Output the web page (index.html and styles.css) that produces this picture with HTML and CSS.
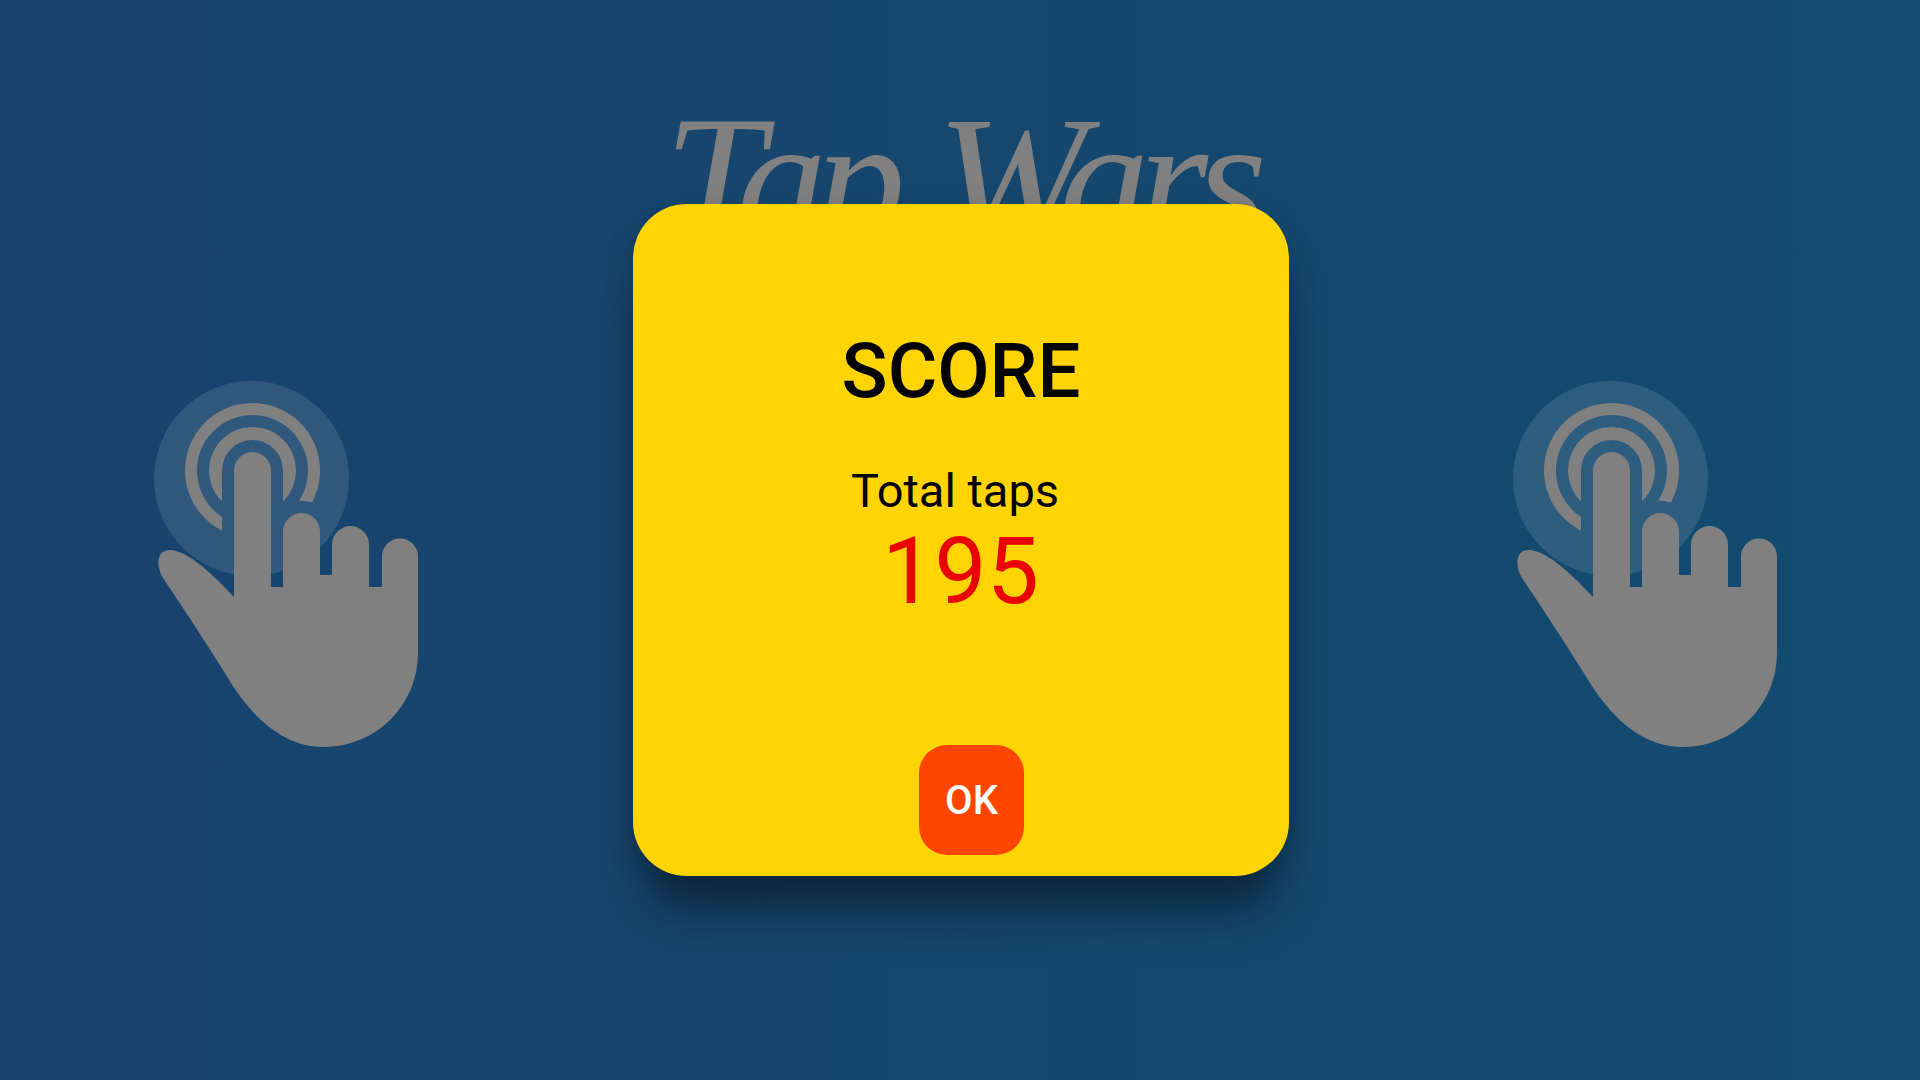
FILE: index.html
```html
<!doctype html>
<html lang="en">
  <head>
    <meta charset="UTF-8" />
    <meta name="viewport" content="width=device-width, initial-scale=1.0" />
    <title>Tap Wars</title>
    <link rel="stylesheet" href="styles.css">
  </head>
  <body>
    <div class="game">
      <h1 class="game-title">Tap Wars</h1>

      <div class="hands">
        <svg class="hand" viewBox="150 375 270 375">
          <circle class="hand-glow" cx="250.5" cy="478.5" r="97.5" />
          <path class="hand-fill" d="M221 530.7A67.5 67.5 0 1 1 311 502.4Q304 500.5 298 500.8A55.5 55.5 0 1 0 221 516.9Z" />
          <path class="hand-fill" d="M221 501.5A43.5 43.5 0 1 1 282 501.5V470.5A30.5 30.5 0 0 0 221 470.5Z" />
          <path class="hand-fill" d="M233 597V470.5A18.5 18.5 0 0 1 270 470.5V587H282V531.5A18.5 18.5 0 0 1 319 531.5V575H331V544.5A18.5 18.5 0 0 1 368 544.5V587H381V556.5A18 18 0 0 1 417 556.5V653A94 94 0 0 1 323 747C285 747 255 722 230 683C215 658 185 612 162 578C155 566 155 550 169 550C185 551 205 567 233 597Z" />
        </svg>
        <svg class="hand" viewBox="150 375 270 375">
          <circle class="hand-glow" cx="250.5" cy="478.5" r="97.5" />
          <path class="hand-fill" d="M221 530.7A67.5 67.5 0 1 1 311 502.4Q304 500.5 298 500.8A55.5 55.5 0 1 0 221 516.9Z" />
          <path class="hand-fill" d="M221 501.5A43.5 43.5 0 1 1 282 501.5V470.5A30.5 30.5 0 0 0 221 470.5Z" />
          <path class="hand-fill" d="M233 597V470.5A18.5 18.5 0 0 1 270 470.5V587H282V531.5A18.5 18.5 0 0 1 319 531.5V575H331V544.5A18.5 18.5 0 0 1 368 544.5V587H381V556.5A18 18 0 0 1 417 556.5V653A94 94 0 0 1 323 747C285 747 255 722 230 683C215 658 185 612 162 578C155 566 155 550 169 550C185 551 205 567 233 597Z" />
        </svg>
      </div>

      <!-- Score dialog -->
      <div class="score-dialog">
        <h2 class="score-title">SCORE</h2>
        <p class="score-label">Total taps</p>
        <p class="score-value">195</p>
        <button class="score-ok" type="button">OK</button>
      </div>
    </div>
  </body>
</html>
```

FILE: styles.css
```css
body {
  margin: 0;
  font-family: Roboto, sans-serif;
}
.game {
  position: relative;
  width: 1920px;
  height: 1080px;
  overflow: hidden;
  background: linear-gradient(90deg, #18436e 0%, #16476e 50%, #134b71 100%);
}
.game-title {
  margin: 0;
  padding-top: 80px;
  height: 160px;
  text-align: center;
  font-family: "Liberation Serif", serif;
  font-style: italic;
  font-weight: 400;
  font-size: 180px;
  line-height: 200px;
  letter-spacing: -11px;
  word-spacing: 8px;
  color: #808080;
}
.hands {
  display: flex;
  justify-content: space-between;
  padding: 135px 140px 0 151px;
}
.hand {
  width: 270px;
  height: 375px;
}
.hand-glow {
  fill: rgba(255, 255, 255, 0.11);
}
.hand-fill {
  fill: #808080;
}
/* Dialog sits over the game screen */
.score-dialog {
  position: absolute;
  top: 204px;
  left: 633px;
  width: 656px;
  height: 672px;
  box-sizing: border-box;
  padding-top: 122px;
  display: flex;
  flex-direction: column;
  align-items: center;
  background: #ffd400;
  border-radius: 54px;
  box-shadow: 0 46px 50px -10px rgba(0, 0, 0, 0.42), 0 8px 30px rgba(0, 0, 0, 0.14);
}
.score-title {
  margin: 0;
  font-size: 76px;
  line-height: 90px;
  font-weight: 500;
  color: #000;
}
.score-label {
  margin: 47px 12px 0 0;
  font-size: 47px;
  line-height: 55px;
  color: #000;
}
.score-value {
  margin: 0 1px 0 0;
  font-size: 93px;
  line-height: 108px;
  color: #ea0000;
}
.score-ok {
  margin: 119px 0 0 21px;
  width: 105px;
  height: 110px;
  padding: 0;
  border: none;
  border-radius: 28px;
  background: #ff4500;
  color: #fff;
  font-family: Roboto, sans-serif;
  font-size: 40px;
  font-weight: 500;
}
```
